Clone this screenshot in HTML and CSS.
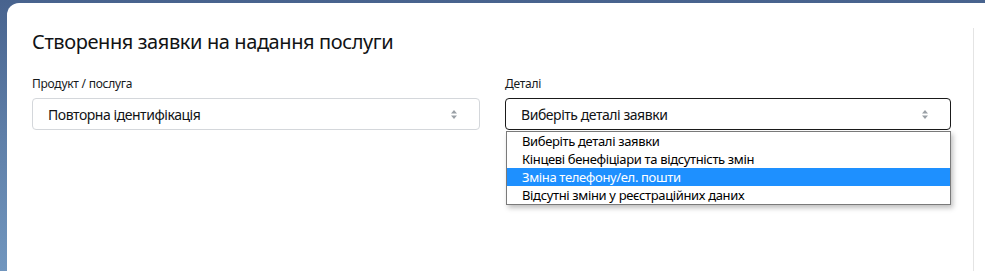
FILE: index.html
```html
<!DOCTYPE html>
<html lang="uk">
<head>
<meta charset="utf-8">
<link rel="stylesheet" href="styles.css">
</head>
<body>
<div class="card">
  <main class="main">
    <h1 class="title">Створення заявки на надання послуги</h1>
    <div class="fields">
      <div class="field">
        <label class="label">Продукт / послуга</label>
        <div class="select">
          <span class="select-text">Повторна ідентифікація</span>
          <svg class="arrows" width="6" height="9" viewBox="0 0 6 9"><path d="M3 0L6 3.5H0Z M3 9L0 5.5H6Z" fill="#9aa0a6"/></svg>
        </div>
      </div>
      <div class="field">
        <label class="label">Деталі</label>
        <div class="select select-focus">
          <span class="select-text">Виберіть деталі заявки</span>
          <svg class="arrows" width="6" height="9" viewBox="0 0 6 9"><path d="M3 0L6 3.5H0Z M3 9L0 5.5H6Z" fill="#9aa0a6"/></svg>
          <ul class="dropdown">
            <li class="option">Виберіть деталі заявки</li>
            <li class="option">Кінцеві бенефіціари та відсутність змін</li>
            <li class="option option-active">Зміна телефону/ел. пошти</li>
            <li class="option">Відсутні зміни у реєстраційних даних</li>
          </ul>
        </div>
      </div>
    </div>
  </main>
  <aside class="side"></aside>
</div>
</body>
</html>
```
FILE: styles.css
```css
html, body {
  margin: 0;
  height: 100%;
}
body {
  background: linear-gradient(to bottom, #48638e 0%, #5f7fa8 50%, #7196be 100%);
  font-family: "Noto Sans", "Open Sans", sans-serif;
  color: #16191c;
  overflow: hidden;
}
.card {
  margin: 3px 0 0 7px;
  height: calc(100% - 3px);
  background: #fff;
  border-top-left-radius: 12px;
  display: flex;
}
.main {
  width: 919px;
  flex: none;
  padding: 0 22px 0 25px;
}
.title {
  margin: 25px 0 0;
  font-size: 20px;
  font-weight: 400;
  line-height: 28px;
  letter-spacing: -0.4px;
  color: #111315;
}
.fields {
  display: grid;
  grid-template-columns: 448px 446px;
  column-gap: 25px;
  margin-top: 19px;
}
.label {
  display: block;
  font-size: 12px;
  line-height: 18px;
  letter-spacing: -0.25px;
  margin-bottom: 5px;
}
.select {
  position: relative;
  box-sizing: border-box;
  height: 32px;
  border: 1px solid #d4d7db;
  border-radius: 4px;
  display: flex;
  align-items: center;
  padding: 0 22px 0 15px;
}
.select-focus {
  border-color: #1a1a1a;
}
.select-text {
  flex: 1;
  font-size: 14px;
  letter-spacing: -0.45px;
  color: #111315;
}
.arrows {
  display: block;
}
.dropdown {
  position: absolute;
  top: 32px;
  left: 0;
  right: -1px;
  margin: 0;
  padding: 0;
  list-style: none;
  background: #fff;
  border: 1px solid #7a7a7a;
  box-shadow: 2px 3px 5px rgba(0, 0, 0, 0.25);
}
.option {
  height: 18px;
  line-height: 18px;
  padding-left: 15px;
  font-size: 13px;
  letter-spacing: -0.35px;
  color: #000;
}
.option-active {
  background: #1e90ff;
  color: #fff;
}
.side {
  flex: 1;
  margin-top: 25px;
  border-left: 1px solid #e4e4e4;
}
```
